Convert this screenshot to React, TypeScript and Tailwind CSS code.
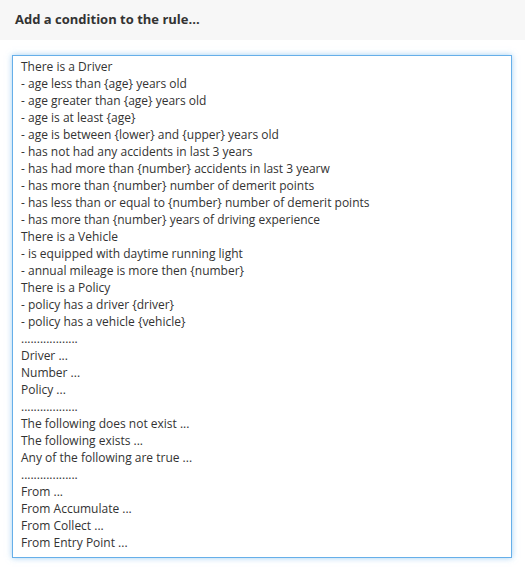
const lines = [
  "There is a Driver",
  "- age less than {age} years old",
  "- age greater than {age} years old",
  "- age is at least {age}",
  "- age is between {lower} and {upper} years old",
  "- has not had any accidents in last 3 years",
  "- has had more than {number} accidents in last 3 yearw",
  "- has more than {number} number of demerit points",
  "- has less than or equal to {number} number of demerit points",
  "- has more than {number} years of driving experience",
  "There is a Vehicle",
  "- is equipped with daytime running light",
  "- annual mileage is more then {number}",
  "There is a Policy",
  "- policy has a driver {driver}",
  "- policy has a vehicle {vehicle}",
  "..................",
  "Driver ...",
  "Number ...",
  "Policy ...",
  "..................",
  "The following does not exist ...",
  "The following exists ...",
  "Any of the following are true ...",
  "..................",
  "From ...",
  "From Accumulate ...",
  "From Collect ...",
  "From Entry Point ...",
]

export default function App() {
  return (
    <div className="min-h-[573px] w-[525px] bg-white font-['Open_Sans',sans-serif] text-[#333]">
      <div className="flex h-10 items-center bg-[#f7f7f7] px-[15px]">
        <h4 className="text-[13px] font-bold">Add a condition to the rule...</h4>
      </div>
      <div className="px-3 pt-[15px]">
        <div className="h-[503px] w-[500px] border border-[#66afe9] px-2 pt-[2px] shadow-[0_0_6px_rgba(102,175,233,0.6)]">
          {lines.map((line, i) => (
            <div key={i} className="h-[17px] text-[12px] leading-[17px] whitespace-pre">
              {line}
            </div>
          ))}
        </div>
      </div>
    </div>
  )
}
